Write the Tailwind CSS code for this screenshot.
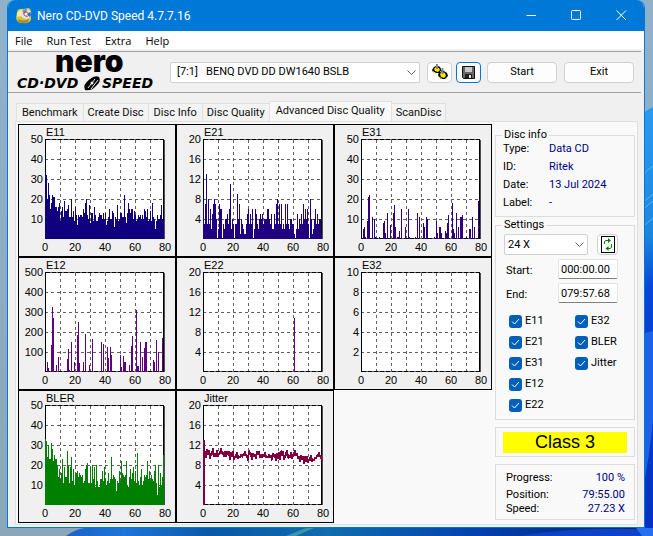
<!DOCTYPE html>
<html lang="en">
<head>
<meta charset="utf-8">
<title>Nero CD-DVD Speed 4.7.7.16</title>
<script src="https://cdn.jsdelivr.net/npm/@tailwindcss/browser@4"></script>
</head>
<body class="relative isolate min-h-screen pl-[7px] pr-2 pb-2 bg-[#0a4fd0] font-[Roboto,sans-serif] text-[11px] leading-[14px] text-black overflow-hidden">

<!-- Desktop wallpaper -->
<svg class="absolute inset-0 -z-10 w-full h-full" viewBox="0 0 653 536" preserveAspectRatio="none" aria-hidden="true">
  <defs>
    <linearGradient id="sky" x1="0" y1="0" x2="0" y2="1"><stop offset="0" stop-color="#8fb2cb"/><stop offset="1" stop-color="#8ba6b8"/></linearGradient>
    <linearGradient id="petal" x1="0" y1="0" x2="0" y2="1"><stop offset="0" stop-color="#2a9bf0"/><stop offset=".3" stop-color="#1b86e0"/><stop offset=".42" stop-color="#0646d8"/><stop offset="1" stop-color="#0430c0"/></linearGradient>
    <linearGradient id="floor" x1="0" y1="0" x2="1" y2="0"><stop offset="0" stop-color="#1a62c8"/><stop offset=".1" stop-color="#1d74da"/><stop offset=".25" stop-color="#0a57a8"/><stop offset=".45" stop-color="#0f6cae"/><stop offset=".7" stop-color="#0440b0"/><stop offset="1" stop-color="#021f70"/></linearGradient>
  </defs>
  <rect width="653" height="536" fill="url(#sky)"/>
  <path d="M640 116Q648 109 653 107V536H640Z" fill="url(#petal)"/>
  <path d="M640 178Q647 170 653 166M640 206Q647 198 653 194M640 213Q647 205 653 201M640 230Q647 222 653 218" stroke="#58b5ee" fill="none"/>
  <path d="M640 337Q647 331 653 331V420Q648 470 640 500Z" fill="#1b62e8"/>
  <path d="M84 528H653V536H66Q74 530 84 528Z" fill="url(#floor)"/>
  <path d="M286 536L306 528H314L296 536Z" fill="#3c94a8"/>
  <path d="M520 536Q580 526 653 530V536Z" fill="#0b43c8"/>
  <path d="M636 528H653V536H642Z" fill="#2470ee"/>
</svg>

<main class="flex flex-col bg-[#f0f0f0] border-x border-b border-[#0078d7] rounded-t-lg overflow-hidden">

  <header class="flex items-center h-[31px] bg-[#0078d7] text-white pl-2">
    <svg class="size-4" viewBox="0 0 16 16" aria-hidden="true">
      <path d="M1 4Q2 0 7 1L13 0Q16 2 15 7L15 12Q12 16 6 15Q1 15 0 10Z" fill="#d8c23c"/>
      <path d="M1 5Q4 1 7 2L6 8 1 9Z" fill="#f4eca0"/>
      <path d="M2 11Q7 14 13 11L12 14Q7 16 3 14Z" fill="#a78d1c"/>
      <circle cx="10" cy="6" r="5" fill="#d9e4ef"/>
      <path d="M10 6L6 3A5 5 0 0 1 11 1Z" fill="#5f96d4"/>
      <path d="M10 6L14.500 4A5 5 0 0 1 14 9Z" fill="#3b68b0"/>
      <path d="M7 5Q9 2 12 4L10 6 12 9Q8 9 7 5Z" fill="#c9423a"/>
      <circle cx="10" cy="6" r="1.500" fill="#fff"/>
    </svg>
    <h1 class="ml-[5px] flex-1 text-[12px]">Nero CD-DVD Speed 4.7.7.16</h1>
    <div class="flex">
      <button class="w-[45px] h-[31px] grid place-items-center" aria-label="Minimize"><svg class="size-[11px]" viewBox="0 0 11 11"><path d="M.5 5.500H10" stroke="#fff"/></svg></button>
      <button class="w-[45px] h-[31px] grid place-items-center" aria-label="Maximize"><svg class="size-[11px]" viewBox="0 0 11 11"><rect x=".5" y=".5" width="9" height="9" rx="1" fill="none" stroke="#fff"/></svg></button>
      <button class="w-[45px] h-[31px] grid place-items-center" aria-label="Close"><svg class="size-[11px]" viewBox="0 0 11 11"><path d="M.5 .5L10 10M10 .5L.5 10" stroke="#fff"/></svg></button>
    </div>
  </header>

  <nav class="flex h-[18px] items-center gap-[14px] bg-white pl-[7px] pt-[2px] font-['Open_Sans',sans-serif]">
    <button>File</button><button>Run Test</button><button>Extra</button><button>Help</button>
  </nav>

  <section class="flex items-center h-[42px] mt-[2px] mr-[3px] border-y border-[#a0a0a0] pr-[7px]">
    <svg class="w-[152px] h-10 ml-[6px] shrink-0 overflow-visible" viewBox="0 0 152 40" role="img" aria-label="nero CD-DVD Speed">
      <text x="41" y="20" font-family="Inter, sans-serif" font-weight="900" font-size="30">nero</text>
      <text x="3" y="36" font-family="DejaVu Sans, sans-serif" font-weight="700" font-style="italic" font-size="14">CD·DVD</text>
      <text x="88" y="36" font-family="DejaVu Sans, sans-serif" font-weight="700" font-style="italic" font-size="14">SPEED</text>
      <path d="M71 38Q68 33 76 27Q81 23 85 25Q88 29 81 35Q77 39 71 38Z"/>
      <path d="M74 36L81 27M77 37L84 28" stroke="#f0f0f0" stroke-width="1"/>
      <circle cx="78" cy="31" r="1.500" fill="#f0f0f0"/>
    </svg>
    <div class="grid items-center flex-1 ml-1">
      <select class="col-start-1 row-start-1 appearance-none h-[21px] w-full bg-white border border-[#d0d0d0] rounded-[2px] pl-[6px] whitespace-pre" aria-label="Drive"><option>[7:1]&nbsp;&nbsp; BENQ DVD DD DW1640 BSLB</option></select>
      <svg class="col-start-1 row-start-1 justify-self-end mr-1 size-[9px] pointer-events-none" viewBox="0 0 9 9"><path d="M.5 2.500L4.500 6.500L8.500 2.500" fill="none" stroke="#606060"/></svg>
    </div>
    <button class="grid place-items-center ml-[7px] w-[25px] h-[21px] bg-[#fdfdfd] border border-[#d0d0d0] rounded-[4px]" aria-label="Options">
      <svg class="w-4 h-4" viewBox="0 0 16 16">
        <path d="M0 6L2 3 4 2 6 2 8 3 9 5 9 7 7 9 4 9 1 8Z" fill="#000"/>
        <path d="M2 5L4 3 7 4 8 6 6 8 3 7Z" fill="#f4e800"/>
        <path d="M6 11L7 8 9 6 12 7 15 9 16 12 13 15 9 15 7 13Z" fill="#000"/>
        <path d="M8 10L10 8 13 9 14 12 12 14 9 13Z" fill="#f4e800"/>
        <path d="M1 7.500L4 9.500M7 13L10 15M8 7.500L10 8.500" stroke="#f4e800"/>
        <path d="M5 0V5M10.500 4V10" stroke="#888" stroke-width="2"/>
      </svg>
    </button>
    <button class="grid place-items-center ml-1 w-[25px] h-[21px] bg-[#fdfdfd] border border-[#0078d7] rounded-[4px]" aria-label="Save">
      <svg class="w-[13px] h-[13px]" viewBox="0 0 13 13"><path d="M.5 .5H12.500V12.500H1.500L.5 11.500Z" fill="#686868" stroke="#101010"/><path d="M3 1H10V6H3Z" fill="#c8c8c8"/><path d="M3 8H10V12H3Z" fill="#202020"/><path d="M7 9H9V12H7Z" fill="#e8e8e8"/></svg>
    </button>
    <button class="ml-[6px] w-[70px] h-[21px] bg-[#fdfdfd] border border-[#d0d0d0] rounded-[4px]">Start</button>
    <button class="ml-[7px] w-[70px] h-[21px] bg-[#fdfdfd] border border-[#d0d0d0] rounded-[4px]">Exit</button>
  </section>

  <div class="flex items-end h-7 ml-2 text-[#101010]" role="tablist">
    <button role="tab" class="h-[18px] px-[5px] border border-b-0 border-[#e0e0e0] bg-[#f3f3f3]">Benchmark</button>
    <button role="tab" class="h-[18px] px-1 border-t border-r border-[#e0e0e0] bg-[#f3f3f3]">Create Disc</button>
    <button role="tab" class="h-[18px] px-[5px] border-t border-r border-[#e0e0e0] bg-[#f3f3f3]">Disc Info</button>
    <button role="tab" class="h-[18px] px-1 border-t border-[#e0e0e0] bg-[#f3f3f3]">Disc Quality</button>
    <button role="tab" aria-selected="true" class="h-5 px-[6px] pb-[2px] border border-b-0 border-[#e0e0e0] bg-[#f9f9f9]">Advanced Disc Quality</button>
    <button role="tab" class="h-[18px] px-1 border-t border-r border-[#e0e0e0] bg-[#f3f3f3]">ScanDisc</button>
  </div>

  <section class="flex gap-[3px] ml-[7px] mr-[6px] mb-[2px] p-[2px] pb-[1px] border border-[#e0e0e0] bg-[#f9f9f9]">
    <div id="charts" class="grid grid-cols-[158px_158px_158px] content-start"></div>

    <aside class="flex flex-col flex-1 pt-1 pb-[2px]">
      <fieldset class="border border-[#dcdcdc] pl-[7px] pb-[6px]">
        <legend class="px-[2px] -ml-[1px]">Disc info</legend>
        <dl class="grid grid-cols-[46px_1fr] gap-y-1">
          <dt>Type:</dt><dd class="text-[#000080]">Data CD</dd>
          <dt>ID:</dt><dd class="text-[#000080]">Ritek</dd>
          <dt>Date:</dt><dd class="text-[#000080]">13 Jul 2024</dd>
          <dt>Label:</dt><dd class="text-[#000080]">-</dd>
        </dl>
      </fieldset>

      <fieldset class="border border-[#dcdcdc] mt-[1px] pl-2 pb-[7px]">
        <legend class="px-[2px] -ml-[2px]">Settings</legend>
        <div class="flex items-center gap-[9px] mt-[2px]">
          <div class="grid items-center w-[84px]">
            <select class="col-start-1 row-start-1 appearance-none w-full h-[21px] bg-white border border-[#d0d0d0] rounded-[2px] pl-[3px]" aria-label="Speed"><option>24 X</option></select>
            <svg class="col-start-1 row-start-1 justify-self-end mr-1 size-[9px] pointer-events-none" viewBox="0 0 9 9"><path d="M.5 2.500L4.500 6.500L8.500 2.500" fill="none" stroke="#606060"/></svg>
          </div>
          <button class="grid place-items-center w-[21px] h-[21px] bg-[#fdfdfd] border border-[#d0d0d0] rounded-[4px]" aria-label="Refresh">
            <svg class="w-[14px] h-[17px]" viewBox="0 0 14 17"><rect x=".5" y=".5" width="13" height="16" fill="#fff" stroke="#000"/><path d="M3.500 8V5.500L5 4.500H7M10.500 8V11.500L9 12.500H7" fill="none" stroke="#008000"/><path d="M7 2L10 4.500 7 7ZM7.500 10L4.500 12.500 7.500 15Z" fill="#008000"/></svg>
          </button>
        </div>
        <div class="grid grid-cols-[53px_60px] items-center gap-y-1 mt-1 pl-[1px]">
          <label for="start" class="pl-[1px] pt-1">Start:</label>
          <input id="start" value="000:00.00" class="w-full h-5 px-[2px] bg-white border border-[#e4e4e4] border-b-[#808080] rounded-[2px]">
          <label for="end" class="pl-[1px] pt-1">End:</label>
          <input id="end" value="079:57.68" class="w-full h-5 px-[2px] bg-white border border-[#e4e4e4] border-b-[#808080] rounded-[2px]">
        </div>
        <div id="checks" class="grid grid-flow-col grid-rows-5 grid-cols-[66px_1fr] gap-y-[7px] mt-[11px] pl-[5px]"></div>
      </fieldset>

      <div class="border border-[#dcdcdc] mt-[7px] px-[7px] pt-1 pb-[3px]">
        <div class="bg-[#ffff00] h-[21px] leading-[21px] text-center text-[18px] font-['Liberation_Sans',Arial,sans-serif]">Class 3</div>
      </div>

      <dl class="grid grid-cols-2 border border-[#dcdcdc] mt-[7px] pl-[10px] pr-[9px] pt-[6px] pb-[3px]">
        <dt>Progress:</dt><dd class="text-right text-[#000080]">100 %</dd>
        <dt class="pt-[3px]">Position:</dt><dd class="pt-[3px] text-right text-[#000080]">79:55.00</dd>
        <dt>Speed:</dt><dd class="text-right text-[#000080]">27.23 X</dd>
      </dl>
    </aside>
  </section>
</main>

<script>
// Dense series: one value per pixel column. Sparse series: [column, value] pairs.
const e11 = [32,32,20,28,22,15,18,22,21,21,16,16,14,16,18,9,14,16,11,19,14,14,15,17,11,11,20,11,14,9,16,12,7,12,11,12,12,11,15,13,18,20,12,10,17,8,13,13,9,16,12,9,9,11,13,12,12,10,13,10,13,7,9,11,15,10,10,14,13,6,11,10,17,9,10,13,13,11,11,22,11,8,13,18,15,13,15,15,10,14,12,9,10,12,11,12,10,12,10,15,14,11,15,9,10,14,9,18,11,10,5,9,12,10,10,12,17,10,9];
const e21 = [7,3,7,13,3,8,3,6,2,5,7,8,7,4,0,2,7,6,6,0,3,2,4,4,5,3,6,11,2,4,3,0,3,3,9,4,7,1,4,3,2,1,1,3,5,6,3,5,3,6,0,2,6,5,3,2,4,5,4,5,3,4,4,4,6,6,4,3,5,2,2,5,3,7,8,3,7,3,7,2,3,2,7,3,7,3,2,4,4,3,3,1,0,2,5,2,4,3,5,3,7,4,6,4,6,3,0,8,4,1,2,4,6,3,5,3,4,4,1];
const e31 = [[2,5],[3,6],[4,1],[6,9],[7,21],[8,22],[11,11],[13,10],[14,1],[18,1],[22,8],[23,9],[24,3],[26,13],[29,7],[32,13],[33,17],[34,6],[36,1],[37,1],[38,4],[40,15],[44,6],[47,15],[48,1],[54,1],[56,13],[58,11],[62,8],[63,6],[65,11],[66,10],[73,1],[75,9],[76,3],[78,6],[79,6],[80,3],[84,4],[85,3],[86,8],[87,12],[91,18],[92,5],[93,3],[95,13],[97,6],[99,11],[100,11],[101,12],[105,1],[108,5],[109,5],[111,11],[113,6],[117,19]];
const e12 = [[2,50],[3,20],[6,135],[7,325],[8,270],[11,35],[13,75],[22,65],[23,115],[24,10],[26,150],[29,50],[32,185],[33,250],[34,45],[38,50],[40,190],[44,35],[47,165],[56,150],[58,140],[62,125],[63,70],[65,125],[66,85],[75,85],[76,25],[78,80],[79,50],[80,50],[84,35],[86,130],[87,180],[91,310],[92,30],[93,30],[95,150],[97,75],[99,120],[100,150],[101,150],[108,60],[109,50],[111,160],[113,100],[117,170]];
const bler = [33,32,24,30,23,23,31,28,22,25,23,23,20,14,18,13,16,23,11,19,14,14,27,20,11,19,24,12,18,10,15,16,17,14,16,15,14,15,11,12,18,20,21,11,11,19,11,20,13,19,9,20,12,9,9,13,13,17,12,19,13,10,12,16,11,13,24,13,15,14,13,7,12,11,17,12,22,16,15,14,15,22,10,9,14,18,13,16,19,12,17,11,26,12,10,14,18,10,12,15,14,15,22,13,17,12,15,13,12,17,20,11,5,20,9,16,10,14,25,11];
const wobble = [0,.8,.3,-.2,.2,-.3,.1,.4,1.100,.6,.2,.1,-.4,.5,-.2,.8,.1,.6,.3,.9,.5,.9,.2,-.5,.1,-.3,1.100,.3,.7,.1,.3,-.1,-.4,.1,-.6,.7,.3];
const jitter = Array.from({length: 119}, (_, i) => {
  const drift = i < 30 ? 10.200 : i < 95 ? 9.900 : i < 112 ? 9.300 : 9.700;
  return drift + wobble[(i * 7) % 37] * .8 - .2 + (i % 2 ? .45 : -.45);
});

const charts = [
  {name: 'E11', max: 50, color: '#100080', dense: e11},
  {name: 'E21', max: 20, color: '#200080', dense: e21},
  {name: 'E31', max: 50, color: '#300080', sparse: e31},
  {name: 'E12', max: 500, color: '#600080', sparse: e12},
  {name: 'E22', max: 20, color: '#700070', sparse: [[91, 10.800]]},
  {name: 'E32', max: 10, color: '#700070', sparse: []},
  {name: 'BLER', max: 50, color: '#008000', dense: bler},
  {name: 'Jitter', max: 20, color: '#800040', line: jitter}
];

// The plot area spans x 27..146 and y 15..115 of a 158x133 cell.
function chart(c) {
  let s = '<rect x="27" y="15" width="119" height="100" fill="#fff"/>';
  for (let i = 1; i < 8; i++) s += `<path d="M${27.5 + i * 15} 16V115" stroke="#606060" stroke-dasharray="3 3"/>`;
  for (let i = 1; i < 5; i++) s += `<path d="M27 ${15.5 + i * 20}H144" stroke="#606060" stroke-dasharray="3 3"/>`;
  s += '<path d="M27 15.500H146M27 114.500H146" stroke="#606060"/><path d="M28 15.500H146M28 114.500H146" stroke="#000" stroke-dasharray="4 2"/>';
  s += '<path d="M27.500 15V115M145.500 15V115" stroke="#000"/><path d="M146.500 16V115" stroke="#505050"/>';
  const bars = c.dense ? c.dense.map((v, i) => [i, v]) : c.sparse || [];
  let d = '';
  for (const [x, v] of bars) {
    const h = Math.round(v / c.max * 100);
    d += `M${27 + Math.min(x, 118)} 115v-${h}h1v${h}z`;
  }
  s += `<path d="${d}" fill="${c.color}"/>`;
  if (c.line) s += `<path d="M27.500 115V50L28.500 62 ${c.line.map((v, i) => `L${28 + i} ${115 - v * 5}`).join('')}" fill="none" stroke="${c.color}" stroke-width="2" stroke-linejoin="bevel"/>`;
  s += `<text x="28" y="12">${c.name}</text>`;
  for (let i = 1; i < 6; i++) s += `<text x="25" y="${119 - i * 20}" text-anchor="end">${c.max / 5 * i}</text>`;
  for (let i = 0; i < 5; i++) s += `<text x="${27 + i * 30}" y="127" text-anchor="middle">${i * 20}</text>`;
  return `<figure class="border border-black bg-[#f0f0f0]"><svg class="-m-px block w-[158px] h-[133px]" viewBox="0 0 158 133" shape-rendering="crispEdges" font-family="Liberation Sans, Arial, sans-serif" font-size="11">${s}</svg></figure>`;
}
document.getElementById('charts').innerHTML = charts.map(chart).join('');

document.getElementById('checks').innerHTML = ['E11', 'E21', 'E31', 'E12', 'E22', 'E32', 'BLER', 'Jitter'].map(n => `
  <label class="flex items-center gap-[3px]"><span class="grid place-items-center">
    <input type="checkbox" checked class="col-start-1 row-start-1 appearance-none size-[13px] rounded-[3px] bg-[#005fb8]">
    <svg class="col-start-1 row-start-1 size-[9px] pointer-events-none" viewBox="0 0 9 9"><path d="M1 4.500L3.500 7 8 2" fill="none" stroke="#fff"/></svg>
  </span>${n}</label>`).join('');
</script>
</body>
</html>
